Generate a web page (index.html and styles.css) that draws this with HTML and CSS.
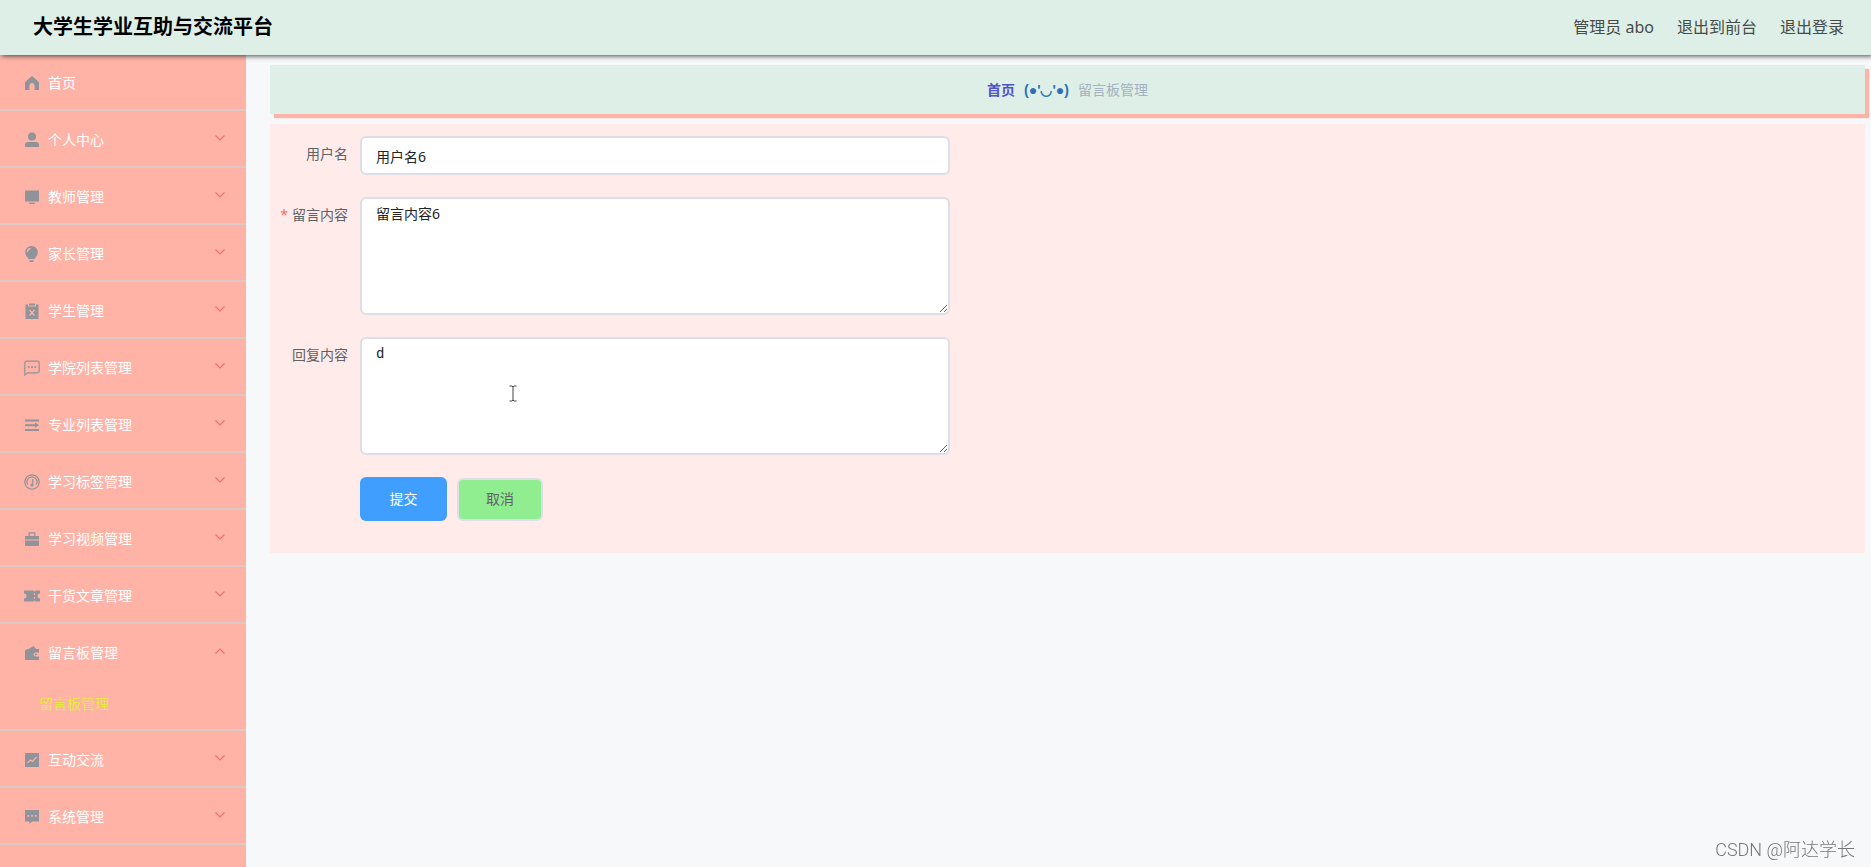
FILE: index.html
```html
<!DOCTYPE html>
<html lang="zh-CN">
<head>
    <meta charset="UTF-8">
    <meta name="viewport" content="width=device-width, initial-scale=1.0">
    <title>大学生学业互助与交流平台</title>
    <link rel="stylesheet" href="styles.css">
</head>
<body>
    <svg class="symbols" aria-hidden="true">
        <symbol id="arrow" viewBox="0 0 12 12"><path d="M1.500 3.500L6 8l4.500-4.500" fill="none" stroke="currentColor" stroke-width="1.200"/></symbol>
    </svg>

    <header class="navbar">
        <h1 class="title">大学生学业互助与交流平台</h1>
        <nav class="user-menu">
            <span>管理员 abo</span>
            <a href="#">退出到前台</a>
            <a href="#">退出登录</a>
        </nav>
    </header>

    <div class="layout">
        <aside class="sidebar">
            <ul class="menu">
                <li class="menu-item home">
                    <a class="menu-title" href="#">
                        <svg class="icon" viewBox="0 0 16 16"><path d="M8 1L1 7v8h4.500v-4.500a2.500 2.500 0 0 1 5 0V15H15V7z"/></svg>
                        <span>首页</span>
                    </a>
                </li>
                <li class="menu-item">
                    <a class="menu-title" href="#">
                        <svg class="icon" viewBox="0 0 16 16"><circle cx="8" cy="4.500" r="4"/><path d="M1 15v-2a3 3 0 0 1 3-3h8a3 3 0 0 1 3 3v2z"/></svg>
                        <span>个人中心</span>
                        <svg class="arrow"><use href="#arrow"/></svg>
                    </a>
                </li>
                <li class="menu-item">
                    <a class="menu-title" href="#">
                        <svg class="icon" viewBox="0 0 16 16"><path d="M1 1.500h14v11H1zM6 13.500h4l1.500 1.500h-7z"/></svg>
                        <span>教师管理</span>
                        <svg class="arrow"><use href="#arrow"/></svg>
                    </a>
                </li>
                <li class="menu-item">
                    <a class="menu-title" href="#">
                        <svg class="icon" viewBox="0 0 16 16"><path d="M7.500 0A6.300 6.300 0 0 0 1.200 6.300C1.200 9 3 11 4.500 13h6c1.500-2 3.300-4 3.300-6.700A6.300 6.300 0 0 0 7.500 0zM5.500 14.200h4V16h-4z"/><path class="cut-line" d="M3.300 6.300a4.200 4.200 0 0 1 3.200-4"/></svg>
                        <span>家长管理</span>
                        <svg class="arrow"><use href="#arrow"/></svg>
                    </a>
                </li>
                <li class="menu-item">
                    <a class="menu-title" href="#">
                        <svg class="icon" viewBox="0 0 16 16"><path d="M1.500 1.500h2.500v2h8v-2h2.500V16h-13z"/><path d="M5 .5h6v2H5z"/><path class="cut-line" d="M5.500 7l5 5.500m0-5.500l-5 5.500"/></svg>
                        <span>学生管理</span>
                        <svg class="arrow"><use href="#arrow"/></svg>
                    </a>
                </li>
                <li class="menu-item">
                    <a class="menu-title" href="#">
                        <svg class="icon" viewBox="0 0 16 16"><path class="line" d="M.8 15V3A1.800 1.800 0 0 1 2.600 1.200h10.800A1.800 1.800 0 0 1 15.200 3v8a1.800 1.800 0 0 1-1.800 1.800H3.500z"/><path d="M3.800 6.200h2v1.600h-2zM7 6.200h2v1.600H7zM10.200 6.200h2v1.600h-2z"/></svg>
                        <span>学院列表管理</span>
                        <svg class="arrow"><use href="#arrow"/></svg>
                    </a>
                </li>
                <li class="menu-item">
                    <a class="menu-title" href="#">
                        <svg class="icon" viewBox="0 0 16 16"><path d="M1 2.500h14v2H1zM1 7.200h10V5.600l4 2.600-4 2.600V9.200H1zM1 12h14v2H1z"/></svg>
                        <span>专业列表管理</span>
                        <svg class="arrow"><use href="#arrow"/></svg>
                    </a>
                </li>
                <li class="menu-item">
                    <a class="menu-title" href="#">
                        <svg class="icon" viewBox="0 0 16 16"><circle class="line" cx="8" cy="8" r="7.200"/><path class="line" d="M3.700 10.500A5 5 0 1 1 12.300 10.500M8.800 5v5"/><circle cx="8" cy="11" r="1.600"/></svg>
                        <span>学习标签管理</span>
                        <svg class="arrow"><use href="#arrow"/></svg>
                    </a>
                </li>
                <li class="menu-item">
                    <a class="menu-title" href="#">
                        <svg class="icon" viewBox="0 0 16 16"><path d="M1 5h14v3.500H1zM1 9.500h14V15H1z"/><path class="line" d="M5.200 5V1.800h5.600V5"/></svg>
                        <span>学习视频管理</span>
                        <svg class="arrow"><use href="#arrow"/></svg>
                    </a>
                </li>
                <li class="menu-item">
                    <a class="menu-title" href="#">
                        <svg class="icon" viewBox="0 0 16 16"><path d="M0 2.500h9.500l1 1.200 1-1.200H16V5.500a2.500 2.500 0 0 0 0 5v3h-4.500l-1-1.200-1 1.200H0v-3a2.500 2.500 0 0 0 0-5z"/><path class="cut-line" d="M10.500 5.300v1.800m0 1.800v1.800"/></svg>
                        <span>干货文章管理</span>
                        <svg class="arrow"><use href="#arrow"/></svg>
                    </a>
                </li>
                <li class="menu-item">
                    <a class="menu-title" href="#">
                        <svg class="icon" viewBox="0 0 16 16"><path d="M1 5l3.500-1L9.500 1l2.500 3h3v3.500h-3.500a2 2 0 0 0 0 4H15V15H1z"/><circle cx="11.800" cy="9.500" r="1"/></svg>
                        <span>留言板管理</span>
                        <svg class="arrow open"><use href="#arrow"/></svg>
                    </a>
                    <a class="submenu-link" href="#">留言板管理</a>
                </li>
                <li class="menu-item">
                    <a class="menu-title" href="#">
                        <svg class="icon" viewBox="0 0 16 16"><path d="M1 1h14v14H1z"/><path class="cut-line" d="M3.500 11l3-3 2 1.500L12.500 5"/></svg>
                        <span>互动交流</span>
                        <svg class="arrow"><use href="#arrow"/></svg>
                    </a>
                </li>
                <li class="menu-item">
                    <a class="menu-title" href="#">
                        <svg class="icon" viewBox="0 0 16 16"><path d="M1 1h14v11.500H8L5.500 15v-2.500H1z"/><path class="cut" d="M3.500 6h1.700v1.700H3.500zM7.200 6h1.700v1.700H7.200zM10.900 6h1.700v1.700h-1.700z"/></svg>
                        <span>系统管理</span>
                        <svg class="arrow"><use href="#arrow"/></svg>
                    </a>
                </li>
            </ul>
        </aside>

        <main class="main">
            <nav class="breadcrumb">
                <a class="crumb-home" href="#">首页</a>
                <span class="separator">(●'◡'●)</span>
                <span class="crumb-current">留言板管理</span>
            </nav>

            <form class="form">
                <div class="form-item">
                    <label for="username">用户名</label>
                    <input class="control" type="text" id="username" value="用户名6">
                </div>
                <div class="form-item">
                    <label class="required" for="content">留言内容</label>
                    <textarea class="control" id="content">留言内容6</textarea>
                </div>
                <div class="form-item">
                    <label for="reply">回复内容</label>
                    <textarea class="control mono" id="reply">d</textarea>
                    <svg class="pointer" viewBox="0 0 8 17" aria-hidden="true"><path d="M.5 1h2.500l1 1 1-1h2.500M4 2v13M.5 16h2.500l1-1 1 1h2.500"/></svg>
                </div>
                <div class="buttons">
                    <button class="btn submit" type="button">提交</button>
                    <button class="btn cancel" type="button">取消</button>
                </div>
            </form>
        </main>
    </div>

    <div class="watermark">CSDN @阿达学长</div>
</body>
</html>
```

FILE: styles.css
```css
* {
    box-sizing: border-box;
}

body {
    margin: 0;
    min-height: 100vh;
    display: flex;
    flex-direction: column;
    background-color: #f6f8fa;
    font-family: "Noto Sans", "Noto Sans CJK SC", sans-serif;
    font-size: 14px;
    line-height: 20px;
    color: #606266;
}

a {
    color: inherit;
    text-decoration: none;
}

.symbols {
    display: none;
}

.navbar {
    position: relative;
    z-index: 1;
    display: flex;
    justify-content: space-between;
    align-items: center;
    height: 55px;
    padding: 0 27px 2px 33px;
    background-color: #deefe7;
    box-shadow: 2px 1px 5px #444;
}

.title {
    margin: 0;
    font-size: 20px;
    line-height: 28px;
    color: #000;
}

.user-menu {
    display: flex;
    gap: 23px;
    font-size: 16px;
    line-height: 24px;
    color: #444b48;
}

.layout {
    flex: 1;
    display: flex;
}

.sidebar {
    width: 246px;
    flex-shrink: 0;
    background-color: #ffb3a7;
}

.menu {
    margin: 0;
    padding: 0;
    list-style: none;
}

.menu-item {
    border-bottom: 2px solid #dcc8c5;
}

.menu-title {
    display: flex;
    align-items: center;
    height: 55px;
    padding: 2px 20px 0 24px;
    color: #fff;
}

.home .menu-title {
    height: 54px;
}

.icon {
    width: 16px;
    height: 16px;
    margin-right: 8px;
    fill: #909399;
}

.icon .line {
    fill: none;
    stroke: #909399;
    stroke-width: 1.2;
}

.icon .cut {
    fill: #ffb3a7;
}

.icon .cut-line {
    fill: none;
    stroke: #ffb3a7;
    stroke-width: 1.2;
}

.arrow {
    width: 12px;
    height: 12px;
    margin: 0 0 4px auto;
    color: #f56c6c;
}

.arrow.open {
    transform: rotate(180deg);
}

.submenu-link {
    display: block;
    padding-left: 39px;
    line-height: 50px;
    color: #e8e840;
}

.main {
    flex: 1;
    padding: 10px 6px 10px 24px;
}

.breadcrumb {
    display: flex;
    justify-content: center;
    align-items: center;
    gap: 9px;
    height: 49px;
    margin-bottom: 10px;
    background-color: #deefe7;
    box-shadow: 4px 4px 1px #ffb3a7;
}

.crumb-home {
    font-weight: bold;
    color: #4f4fd0;
}

.separator {
    font-family: "Liberation Sans", "Noto Sans", sans-serif;
    font-weight: bold;
    color: #2a72b5;
}

.crumb-current {
    color: #a3b1c0;
}

.form {
    display: flex;
    flex-direction: column;
    gap: 22px;
    padding: 12px 0 32px;
    background-color: #ffecea;
}

.form-item {
    position: relative;
    display: flex;
}

label {
    width: 78px;
    margin-right: 12px;
    padding-top: 8px;
    text-align: right;
}

.required::before {
    content: "*";
    margin-right: 4px;
    color: #f56c6c;
}

.control {
    width: 37%;
    height: 39px;
    padding: 0 14px;
    border: 2px solid #dcdfe6;
    border-radius: 6px;
    background-color: #fff;
    font: inherit;
    color: #222;
}

textarea.control {
    height: 118px;
    padding: 5px 14px;
    resize: both;
}

.control.mono {
    font-family: "Liberation Mono", monospace;
}

/* text cursor over the reply box */
.pointer {
    position: absolute;
    left: 239px;
    top: 48px;
    width: 8px;
    height: 17px;
    fill: none;
    stroke: #444;
}

.buttons {
    display: flex;
    align-items: center;
    gap: 10px;
    margin-left: 90px;
}

.btn {
    border: none;
    border-radius: 6px;
    font: inherit;
    cursor: pointer;
}

.submit {
    width: 87px;
    height: 44px;
    background-color: #409eff;
    color: #fff;
}

.cancel {
    width: 86px;
    height: 43px;
    border: 2px solid #dcdfe6;
    background-color: #90ee90;
    color: #606266;
}

.watermark {
    position: fixed;
    right: 16px;
    bottom: 4px;
    font-family: Roboto, "Noto Sans CJK SC", sans-serif;
    font-size: 18px;
    font-weight: 300;
    line-height: 26px;
    color: #777;
}
```
